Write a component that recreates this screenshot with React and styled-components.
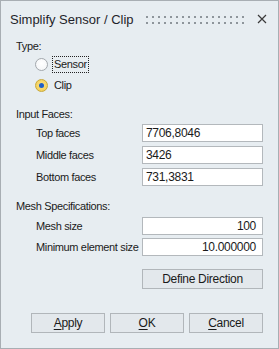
import React from "react";
import styled, { createGlobalStyle } from "styled-components";

const Global = createGlobalStyle`
  html, body { margin: 0; padding: 0; background: #e7edf1; }
  * { box-sizing: border-box; }
`;

const Window = styled.div`
  width: 279px;
  height: 349px;
  border: 1px solid #a8aeb3;
  background: #e7edf1;
  display: flex;
  flex-direction: column;
  font-family: "Liberation Sans", Arial, sans-serif;
  font-size: 11px;
  letter-spacing: -0.35px;
  color: #1b1b1b;
`;

const TitleBar = styled.div`
  height: 36px;
  display: flex;
  align-items: center;
  padding: 0 11px 0 9px;
  gap: 12px;
`;

const Title = styled.div`
  font-size: 13px;
  letter-spacing: 0;
  color: #1f1f2a;
  white-space: nowrap;
`;

const Grip = styled.div`
  flex: 1;
  height: 8px;
  margin-top: 1px;
  background-image: linear-gradient(to bottom, #8e959b 2px, transparent 2px);
  background-size: 6px 6px;
  -webkit-mask-image: linear-gradient(to right, #000 2px, transparent 2px);
  -webkit-mask-size: 6px 6px;
  mask-image: linear-gradient(to right, #000 2px, transparent 2px);
  mask-size: 6px 6px;
`;

const Close = styled.svg`
  width: 10px;
  height: 10px;
  flex: none;
`;

const Body = styled.div`
  display: flex;
  flex-direction: column;
  padding: 2px 15px 0 15px;
`;

const SectionLabel = styled.div`
  line-height: 14px;
  height: 14px;
  margin-top: ${(p) => p.$mt || 0}px;
`;

const RadioRow = styled.div`
  display: flex;
  align-items: center;
  height: 18px;
  padding-left: 19px;
  margin-top: ${(p) => p.$mt || 0}px;
`;

const RadioDot = styled.span`
  width: 13px;
  height: 13px;
  border-radius: 50%;
  flex: none;
  display: flex;
  align-items: center;
  justify-content: center;
  border: 1px solid ${(p) => (p.$checked ? "#c9a93a" : "#a3a8ad")};
  background: ${(p) =>
    p.$checked
      ? "radial-gradient(circle at 50% 45%, #fbe38a, #f0c94a)"
      : "radial-gradient(circle at 50% 40%, #ffffff, #f1f3f5)"};
  &::after {
    content: "";
    width: 5px;
    height: 5px;
    border-radius: 50%;
    background: #1e5fc8;
    display: ${(p) => (p.$checked ? "block" : "none")};
  }
`;

const RadioLabel = styled.span`
  margin-left: 4px;
  padding: 0 1px;
  line-height: 15px;
  border: 1px ${(p) => (p.$focus ? "dotted #222" : "solid transparent")};
`;

const FieldRow = styled.div`
  display: grid;
  grid-template-columns: 1fr 121px;
  align-items: center;
  padding-left: 20px;
  height: 18px;
  margin-top: ${(p) => p.$mt || 0}px;
`;

const Field = styled.div`
  height: 18px;
  background: #ffffff;
  border: 1px solid #b3b8bc;
  line-height: 16px;
  padding: 0 6px 0 3px;
  text-align: ${(p) => (p.$right ? "right" : "left")};
  font-size: 12px;
  letter-spacing: -0.3px;
  color: #1a1a1a;
`;

const WideButtonRow = styled.div`
  display: flex;
  justify-content: flex-end;
  margin-top: ${(p) => p.$mt || 0}px;
`;

const Button = styled.div`
  width: ${(p) => p.$w}px;
  height: 20px;
  background: #e3e8ec;
  border: 1px solid #b1b6ba;
  display: flex;
  align-items: center;
  justify-content: center;
  font-size: 12px;
  letter-spacing: -0.3px;
  color: #1a1a1a;
  u { text-decoration: underline; text-underline-offset: 2px; }
`;

const Footer = styled.div`
  display: flex;
  justify-content: flex-end;
  gap: 5px;
  margin-top: 24px;
`;

export default function App() {
  return (
    <>
      <Global />
      <Window>
        <TitleBar>
          <Title>Simplify Sensor / Clip</Title>
          <Grip />
          <Close viewBox="0 0 10 10">
            <path d="M1 1 L9 9 M9 1 L1 9" stroke="#3a3a3a" strokeWidth="1.2" fill="none" />
          </Close>
        </TitleBar>
        <Body>
          <SectionLabel>Type:</SectionLabel>
          <RadioRow $mt={2}>
            <RadioDot />
            <RadioLabel $focus>Sensor</RadioLabel>
          </RadioRow>
          <RadioRow $mt={3}>
            <RadioDot $checked />
            <RadioLabel>Clip</RadioLabel>
          </RadioRow>

          <SectionLabel $mt={13}>Input Faces:</SectionLabel>
          <FieldRow $mt={3}>
            <span>Top faces</span>
            <Field>7706,8046</Field>
          </FieldRow>
          <FieldRow $mt={4}>
            <span>Middle faces</span>
            <Field>3426</Field>
          </FieldRow>
          <FieldRow $mt={4}>
            <span>Bottom faces</span>
            <Field>731,3831</Field>
          </FieldRow>

          <SectionLabel $mt={13}>Mesh Specifications:</SectionLabel>
          <FieldRow $mt={4}>
            <span>Mesh size</span>
            <Field $right>100</Field>
          </FieldRow>
          <FieldRow $mt={3}>
            <span>Minimum element size</span>
            <Field $right>10.000000</Field>
          </FieldRow>

          <WideButtonRow $mt={13}>
            <Button $w={121}>Define Direction</Button>
          </WideButtonRow>

          <Footer>
            <Button $w={74}><span><u>A</u>pply</span></Button>
            <Button $w={74}><span><u>O</u>K</span></Button>
            <Button $w={74}><span><u>C</u>ancel</span></Button>
          </Footer>
        </Body>
      </Window>
    </>
  );
}
